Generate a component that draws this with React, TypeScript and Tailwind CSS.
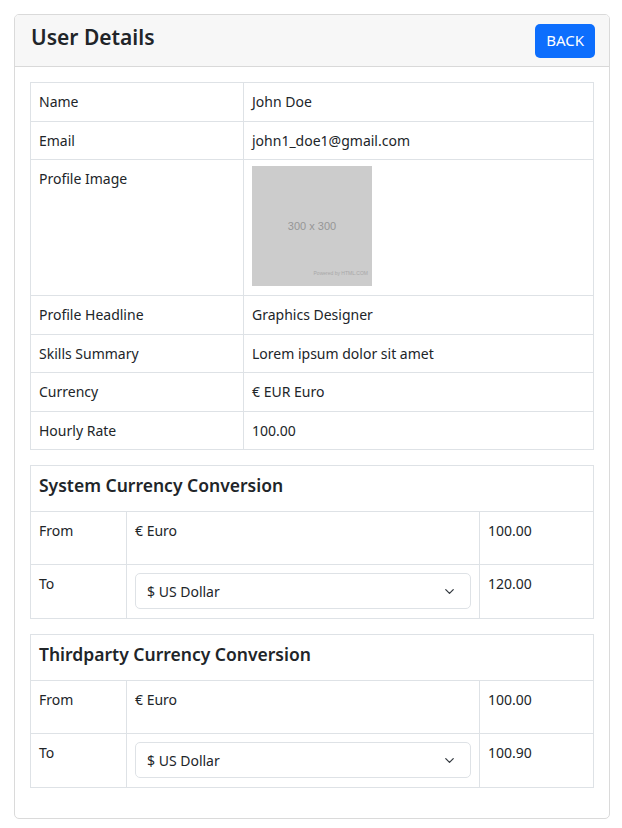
import { ChevronDown } from 'lucide-react'

const details: [string, string][] = [
  ['Name', 'John Doe'],
  ['Email', 'john1_doe1@gmail.com'],
  ['Profile Image', ''],
  ['Profile Headline', 'Graphics Designer'],
  ['Skills Summary', 'Lorem ipsum dolor sit amet'],
  ['Currency', '€ EUR Euro'],
  ['Hourly Rate', '100.00'],
]

function Placeholder() {
  return (
    <div className="relative w-[120px] h-[120px] bg-[#cccccc] flex items-center justify-center">
      <span className="text-[11px] text-[#969696] font-['Liberation_Sans',sans-serif]">300 x 300</span>
      <span className="absolute right-[4px] bottom-[2px] text-[5px] text-[#a8a8a8] font-['Liberation_Sans',sans-serif]">
        Powered by HTML.COM
      </span>
    </div>
  )
}

function Conversion({ title, result }: { title: string; result: string }) {
  return (
    <div className="border border-[#dee2e6] mb-[15px]">
      <div className="h-[46px] px-[8px] flex items-center border-b border-[#dee2e6]">
        <h3 className="text-[17.5px] font-semibold mt-[-6px]">{title}</h3>
      </div>
      <div className="grid grid-cols-[96px_353px_1fr]">
        <div className="h-[53px] px-[8px] pt-[8px] border-r border-b border-[#dee2e6]">From</div>
        <div className="h-[53px] px-[8px] pt-[8px] border-r border-b border-[#dee2e6]">€ Euro</div>
        <div className="h-[53px] px-[8px] pt-[8px] border-b border-[#dee2e6]">100.00</div>
        <div className="h-[53px] px-[8px] pt-[8px] border-r border-[#dee2e6]">To</div>
        <div className="h-[53px] px-[8px] pt-[8px] border-r border-[#dee2e6]">
          <div className="h-[36px] border border-[#dee2e6] rounded-[5px] px-[11px] flex items-center justify-between">
            <span>$ US Dollar</span>
            <ChevronDown size={15} strokeWidth={2} className="text-[#343a40] mr-[2px]" />
          </div>
        </div>
        <div className="h-[53px] px-[8px] pt-[8px]">{result}</div>
      </div>
    </div>
  )
}

export default function App() {
  return (
    <div className="w-[622px] h-[828px] bg-white p-[14px] text-[14px] leading-[21px] text-[#212529] font-['Noto_Sans',sans-serif]">
      <div className="w-[596px] border border-[#dadada] rounded-[5px] overflow-hidden">
        <div className="h-[52px] bg-[#f7f7f7] border-b border-[#d9d9d9] pl-[16px] pr-[14px] flex items-center justify-between">
          <h2 className="text-[21px] font-semibold leading-none mt-[-6px]">User Details</h2>
          <button className="h-[34px] px-[11px] bg-[#0d6efd] text-white text-[15px] rounded-[5px]">BACK</button>
        </div>
        <div className="px-[15px] pt-[15px] pb-[15px]">
          <div className="border border-[#dee2e6] mb-[15px]">
            {details.map(([k, v], i) => (
              <div
                key={k}
                className={`grid grid-cols-[213px_1fr] ${i < details.length - 1 ? 'border-b border-[#dee2e6]' : ''}`}
              >
                <div className={`px-[8px] border-r border-[#dee2e6] ${k === 'Profile Image' ? 'pt-[8px] h-[135px]' : 'h-[37.5px] flex items-center'}`}>
                  {k}
                </div>
                <div className={`px-[8px] ${k === 'Profile Image' ? 'pt-[6px]' : 'flex items-center'}`}>
                  {k === 'Profile Image' ? <Placeholder /> : v}
                </div>
              </div>
            ))}
          </div>
          <Conversion title="System Currency Conversion" result="120.00" />
          <Conversion title="Thirdparty Currency Conversion" result="100.90" />
        </div>
      </div>
    </div>
  )
}
